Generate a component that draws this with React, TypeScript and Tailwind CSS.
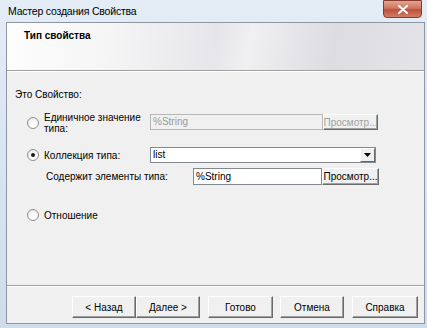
import React from 'react';

const font = { fontFamily: '"Liberation Sans", "DejaVu Sans", sans-serif' };

const Radio = ({ checked }: { checked?: boolean }) => (
  <span className="w-[12px] h-[12px] rounded-full border border-[#8e8f8f] bg-[radial-gradient(circle_at_60%_65%,#ffffff_30%,#dcdcdc_100%)] flex items-center justify-center shrink-0">
    {checked && <span className="w-[4px] h-[4px] rounded-full bg-[#1a1a1a]" />}
  </span>
);

const ClassicButton = ({ label, w, disabled }: { label: string; w: string; disabled?: boolean }) => (
  <div
    className={`${w} h-full flex items-center justify-center bg-[#f0f0f0] border border-t-white border-l-white border-r-[#6b6b6b] border-b-[#6b6b6b] shadow-[inset_-1px_-1px_0_#a0a0a0] text-[10px] ${
      disabled ? 'text-[#a0a0a0]' : 'text-black'
    }`}
  >
    {label}
  </div>
);

const WizButton = ({ label, w }: { label: string; w: string }) => (
  <div className={`${w} h-[22px] flex items-center justify-center bg-[#f0f0f0] border border-t-white border-l-white border-r-[#696969] border-b-[#696969] shadow-[inset_-1px_-1px_0_#a0a0a0] text-[10px] text-black`}>
    {label}
  </div>
);

export default function App() {
  return (
    <div
      style={font}
      className="w-[427px] h-[328px] overflow-hidden flex flex-col pl-[6px] pr-[2px] pb-[4px] bg-[linear-gradient(180deg,#e4ecf6_0%,#dbe6f3_40%,#cfdcec_100%)]"
    >
      {/* title bar */}
      <div className="h-[22px] flex items-center justify-between shrink-0">
        <span className="text-[10.5px] tracking-[-0.2px] text-black pl-[2px] pt-[1px]">Мастер создания Свойства</span>
        <div className="w-[39px] h-[18px] mb-[4px] mr-[3px] rounded-b-[4px] border border-[#8a3a2c] bg-[linear-gradient(180deg,#e3a595_0%,#cf7560_45%,#bf4f38_55%,#d07e68_100%)] flex items-center justify-center">
          <svg width="10" height="9" viewBox="0 0 10 9">
            <path d="M1 1 L9 8 M9 1 L1 8" stroke="#fff" strokeWidth="2" strokeLinecap="round" />
          </svg>
        </div>
      </div>

      {/* client */}
      <div className="flex-1 flex flex-col border border-[#8d97a3] bg-[#f0f0f0]">
        {/* header */}
        <div className="h-[47px] shrink-0 bg-[linear-gradient(100deg,#fdfdfd_0%,#f5f5f6_25%,#e6e6ea_50%,#f0f0f2_58%,#dcdce1_78%,#e4e4e8_100%)] flex items-start pl-[17px] pt-[5px]">
          <span className="text-[10px] font-bold text-black">Тип свойства</span>
        </div>
        <div className="h-px bg-[#a0a0a0] shrink-0" />
        <div className="h-px bg-white shrink-0" />

        {/* content */}
        <div className="flex-1 flex flex-col pl-[8px] pt-[16px] text-[10px] text-black">
          <div className="h-[14px] leading-[14px]">Это Свойство:</div>

          {/* single value */}
          <div className="flex items-start mt-[13px] h-[24px]">
            <div className="w-[12px] shrink-0" />
            <div className="pt-[2px]"><Radio /></div>
            <div className="w-[111px] pl-[5px] shrink-0">
              <div className="-mt-[3px] leading-[11px]">Единичное значение</div>
              <div className="leading-[11px]">типа:</div>
            </div>
            <div className="w-[173px] h-[16px] border border-[#b8b8b8] bg-[#f0f0f0] text-[#9a9a9a] pl-[2px] leading-[14px] -mt-[1px] shrink-0">
              %String
            </div>
            <div className="h-[16px] -mt-[1px]">
              <ClassicButton label="Просмотр..." w="w-[55px]" disabled />
            </div>
          </div>

          {/* collection */}
          <div className="flex items-center mt-[8px] h-[16px]">
            <div className="w-[12px] shrink-0" />
            <Radio checked />
            <div className="w-[111px] pl-[5px] shrink-0">Коллекция типа:</div>
            <div className="w-[226px] h-[16px] border border-[#828790] bg-white flex items-center shrink-0">
              <span className="flex-1 pl-[2px] leading-[14px]">list</span>
              <div className="w-[15px] h-[14px] bg-[#f0f0f0] border border-t-white border-l-white border-r-[#696969] border-b-[#696969] flex items-center justify-center">
                <svg width="7" height="4" viewBox="0 0 7 4">
                  <path d="M0 0 H7 L3.5 4 Z" fill="#000" />
                </svg>
              </div>
            </div>
          </div>

          {/* contains */}
          <div className="flex items-center mt-[5px] h-[17px]">
            <div className="w-[31px] shrink-0" />
            <div className="w-[147px] shrink-0">Содержит элементы типа:</div>
            <div className="w-[129px] h-[17px] border border-[#828790] bg-white pl-[2px] leading-[15px] shrink-0">%String</div>
            <div className="h-[17px]">
              <ClassicButton label="Просмотр..." w="w-[57px]" />
            </div>
          </div>

          {/* relation */}
          <div className="flex items-center mt-[22px] h-[16px]">
            <div className="w-[12px] shrink-0" />
            <Radio />
            <div className="pl-[5px]">Отношение</div>
          </div>
        </div>

        <div className="h-px bg-[#a0a0a0] shrink-0" />
        <div className="h-px bg-white shrink-0" />

        {/* footer */}
        <div className="h-[36px] shrink-0 flex items-start justify-end pt-[9px] pr-[6px]">
          <WizButton label="< Назад" w="w-[64px]" />
          <WizButton label="Далее >" w="w-[64px]" />
          <div className="w-[8px]" />
          <WizButton label="Готово" w="w-[65px]" />
          <div className="w-[7px]" />
          <WizButton label="Отмена" w="w-[64px]" />
          <div className="w-[8px]" />
          <WizButton label="Справка" w="w-[66px]" />
        </div>
      </div>
    </div>
  );
}
